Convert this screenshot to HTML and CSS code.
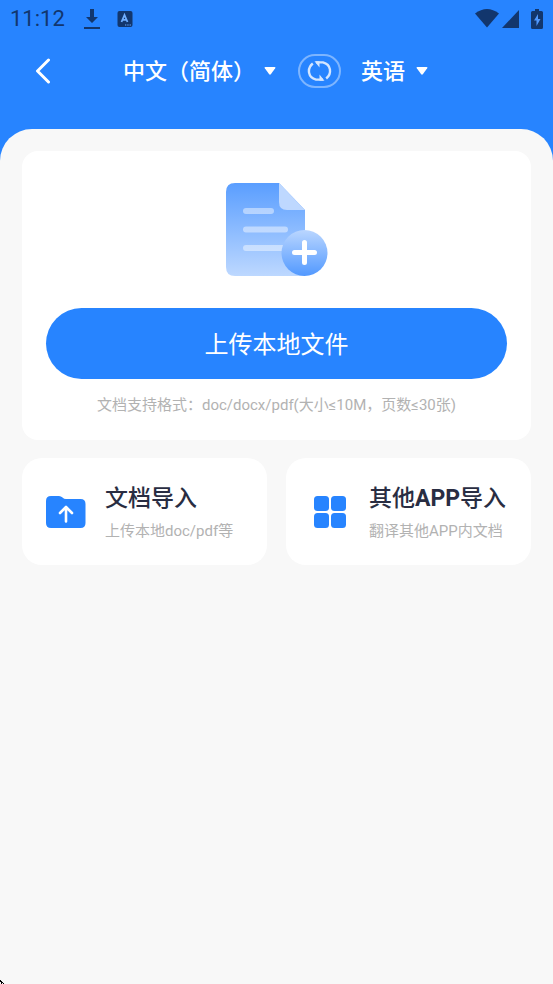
FILE: index.html
```html
<!DOCTYPE html>
<html lang="zh-CN">
<head>
<meta charset="utf-8">
<meta name="viewport" content="width=device-width, initial-scale=1">
<title>文档翻译</title>
<link rel="stylesheet" href="styles.css">
</head>
<body>
<header class="top">
  <div class="status">
    <time class="clock">11:12</time>
    <svg class="status-download" width="16" height="22" viewBox="0 0 16 22" fill="currentColor"><path d="M6 1h4v8h4l-6 6-6-6h4zM0 19h16v2H0z"/></svg>
    <svg class="status-app" width="16" height="16" viewBox="0 0 16 16"><rect x="0.500" width="15" height="16" rx="2" fill="currentColor"/><path d="M4.500 11 7.500 4l3 7M5.400 8.800h4.200" fill="none" stroke="#6faeff" stroke-width="1.800"/><path d="M8 14h1.300M10.300 14h1.300M12.600 14h1.300" stroke="#6faeff"/></svg>
    <div class="status-right">
      <svg width="24" height="19" viewBox="0 0 24 19" fill="currentColor"><path d="M0 4.500Q12-4.500 24 4.500L12 18.500z"/></svg>
      <svg width="17" height="18" viewBox="0 0 17 18" fill="currentColor"><path d="M17 0v18H0z"/></svg>
      <svg class="battery" width="12" height="20" viewBox="0 0 12 20"><path d="M4 0h4v2h2.500Q12 2 12 3.500v15Q12 20 10.500 20h-9Q0 20 0 18.500v-15Q0 2 1.500 2H4z" fill="currentColor"/><path d="M7 5 3 11.500h2.500V17L9.500 10H7z" fill="#4f98ff"/></svg>
    </div>
  </div>
  <nav class="bar">
    <button class="back" type="button" aria-label="返回">
      <svg width="16" height="26" viewBox="0 0 16 26" fill="none" stroke="currentColor" stroke-width="3" stroke-linecap="round" stroke-linejoin="round"><path d="M13.500 2 2.500 13l11 11"/></svg>
    </button>
    <label class="language source">
      <select aria-label="源语言"><option>中文（简体）</option></select>
      <svg width="12" height="8" viewBox="0 0 12 8" fill="currentColor"><path d="M1.500 0h9q1.500 0 .7 1.200L7 7Q6 8.300 5 7L.8 1.200Q0 0 1.500 0z"/></svg>
    </label>
    <button class="swap" type="button" aria-label="交换语言">
      <svg width="26" height="22" viewBox="0 0 26 22"><g fill="none" stroke="currentColor" stroke-width="2.400"><path d="M5.800 3.500C-.2 8.500.8 17.500 9 19.600H16"/><path d="M19.200 18.500C25.200 13.500 24.200 4.500 16 2.400H9"/></g><path d="M12.500 14.500 17.500 20.800h-5zM12.500 7.500 7.500 1.200h5z" fill="currentColor"/></svg>
    </button>
    <label class="language target">
      <select aria-label="目标语言"><option>英语</option></select>
      <svg width="12" height="8" viewBox="0 0 12 8" fill="currentColor"><path d="M1.500 0h9q1.500 0 .7 1.200L7 7Q6 8.300 5 7L.8 1.200Q0 0 1.500 0z"/></svg>
    </label>
  </nav>
</header>
<main class="sheet">
  <section class="card upload">
    <svg class="art" width="102" height="93" viewBox="0 0 102 93">
      <defs>
        <linearGradient id="page" x1="0" y1="0" x2="0" y2="1"><stop offset="0" stop-color="#5a9eff"/><stop offset="1" stop-color="#bdd8ff"/></linearGradient>
        <linearGradient id="disc" x1="0" y1="0" x2="0" y2="1"><stop offset="0" stop-color="#bad6ff"/><stop offset="1" stop-color="#5299ff"/></linearGradient>
      </defs>
      <path d="M9 0h44l26 27v66H9q-9 0-9-9V9q0-9 9-9z" fill="url(#page)"/>
      <path d="M53 0l26 27H61q-8 0-8-8z" fill="#bed8ff"/>
      <g stroke="#fff" stroke-opacity=".45" stroke-width="6" stroke-linecap="round"><path d="M20 28h25M20 46.500h39M20 65h38"/></g>
      <circle cx="78.500" cy="70" r="23" fill="url(#disc)"/>
      <path d="M68.500 69.500h20M78.500 59.500v20" stroke="#fff" stroke-width="5" stroke-linecap="round"/>
    </svg>
    <button class="upload-button" type="button">上传本地文件</button>
    <p class="hint">文档支持格式：doc/docx/pdf(大小≤10M，页数≤30张)</p>
  </section>
  <div class="options">
    <a class="card option" href="#file">
      <svg class="option-icon" width="40" height="34" viewBox="0 0 40 34"><path d="M5 1h8q2 0 3.500 1.500T20 4h14.500q5 0 5 5v19q0 5-5 5H5q-5 0-5-5V6q0-5 5-5z" fill="#2784ff"/><path d="M20 26.500V12.500M14 18l6-6 6 6" fill="none" stroke="#fff" stroke-width="2.600" stroke-linecap="round" stroke-linejoin="round"/></svg>
      <span class="option-text"><strong>文档导入</strong><small>上传本地doc/pdf等</small></span>
    </a>
    <a class="card option" href="#app">
      <svg class="option-icon" width="40" height="34" viewBox="0 0 40 34" fill="#2784ff"><rect x="4" y="1" width="15" height="15" rx="3.500"/><rect x="21" y="1" width="15" height="15" rx="3.500"/><rect x="4" y="18" width="15" height="15" rx="3.500"/><rect x="21" y="18" width="15" height="15" rx="3.500"/></svg>
      <span class="option-text"><strong>其他<b>APP</b>导入</strong><small>翻译其他APP内文档</small></span>
    </a>
  </div>
</main>
<svg class="corner" width="4" height="4" viewBox="0 0 4 4" shape-rendering="crispEdges"><path d="M0 0h1v1h1v1h1v1h1v1H3V3H2v1H1V2H0z"/></svg>
</body>
</html>
```

FILE: styles.css
```css
* {
  box-sizing: border-box;
}

body {
  display: flex;
  flex-direction: column;
  min-height: 100vh;
  margin: 0;
  background: #2784ff;
  font-family: Roboto, "Noto Sans CJK SC", sans-serif;
}

svg {
  display: block;
  flex: none;
}

button,
select {
  margin: 0;
  padding: 0;
  border: 0;
  background: none;
  color: inherit;
  font: inherit;
}

.top {
  padding-bottom: 32px;
  color: #fff;
}

.status {
  display: flex;
  align-items: center;
  height: 37px;
  padding: 0 10px;
  color: #12366d;
}

.clock {
  font-size: 22px;
  line-height: 38px;
}

.status-download {
  margin-left: 19px;
}

.status-app {
  margin-left: 17px;
}

.status-right {
  display: flex;
  align-items: center;
  gap: 3px;
  margin-left: auto;
}

.battery {
  margin-left: 9px;
}

.bar {
  display: flex;
  align-items: center;
  height: 52px;
  margin-top: 8px;
  padding: 0 35px;
}

.language {
  display: flex;
  align-items: center;
  font-size: 22px;
  font-weight: 500;
}

.language select {
  appearance: none;
  height: 32px;
}

.source {
  gap: 8px;
  margin-left: 72px;
}

.target {
  gap: 10px;
  margin-left: 20px;
}

.swap {
  display: flex;
  align-items: center;
  justify-content: center;
  width: 43px;
  height: 34px;
  margin-left: 22px;
  border: 2px solid #7db5ff;
  border-radius: 17px;
  color: #d4e6ff;
}

.sheet {
  flex: 1;
  padding: 22px;
  border-radius: 32px 32px 0 0;
  background: #f8f8f8;
}

.card {
  border-radius: 20px;
  background: #fff;
}

.upload {
  display: flex;
  flex-direction: column;
  align-items: center;
  padding: 32px 24px 24px;
  border-radius: 16px;
}

.upload-button {
  width: 100%;
  height: 71px;
  margin: 32px 0 16px;
  padding-bottom: 2px;
  border-radius: 36px;
  background: #2784ff;
  color: #fff;
  font-size: 24px;
}

.hint {
  margin: 0;
  color: #b2b2b2;
  font-size: 15px;
  line-height: 21px;
}

.options {
  display: grid;
  grid-template-columns: 1fr 1fr;
  gap: 19px;
  margin-top: 18px;
}

.option {
  display: flex;
  align-items: center;
  gap: 19px;
  height: 107px;
  padding-left: 24px;
  color: #292d42;
  text-decoration: none;
  white-space: nowrap;
}

.option-text {
  display: flex;
  flex-direction: column;
  gap: 8px;
  padding-top: 2px;
}

.option-text strong {
  font-size: 23px;
  font-weight: 500;
  line-height: 28px;
}

.option-text b {
  font-weight: 700;
}

.option-text small {
  color: #b2b2b2;
  font-size: 15px;
  line-height: 20px;
}

.corner {
  position: absolute;
  bottom: 0;
  left: 0;
}
```
